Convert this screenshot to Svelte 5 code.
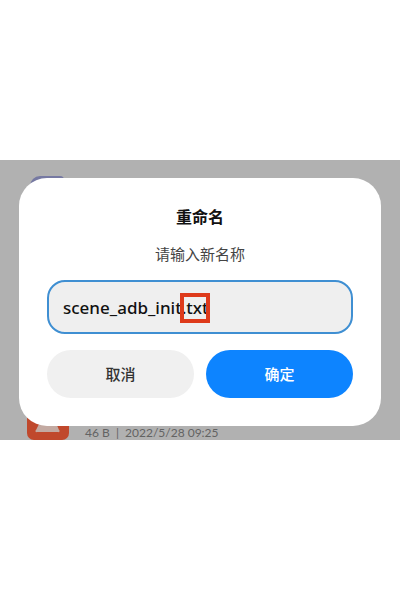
<script>
    let fileName = "scene_adb_init.txt";

    const behind = {
        size: "46 B",
        modified: "2022/5/28 09:25",
    };
</script>

<main class="screen">
    <div class="files">
        <div class="file">
            <span class="folder-icon"></span>
        </div>
        <div class="file">
            <svg class="file-icon" width="42" height="42" viewBox="0 0 42 42" aria-hidden="true">
                <rect width="42" height="42" rx="7" fill="#c0482c" />
                <path d="M15 20h12l5 12a1 1 0 0 1-1 2H10a1 1 0 0 1-1-2z" fill="#c3aaa2" />
            </svg>
            <span class="details">{behind.size} &nbsp;|&nbsp; {behind.modified}</span>
        </div>
    </div>

    <form class="dialog" on:submit|preventDefault>
        <h1>重命名</h1>
        <label for="file-name">请输入新名称</label>
        <div class="field">
            <input id="file-name" type="text" bind:value={fileName} />
            <span class="highlight"></span>
        </div>
        <div class="buttons">
            <button type="button" class="cancel">取消</button>
            <button type="submit" class="confirm">确定</button>
        </div>
    </form>
</main>

<style>
    :global(body) {
        background: #fff;
    }
    .screen {
        position: relative;
        margin: 160px 0;
        padding: 18px 19px 14px;
        background: #b1b1b1;
        overflow: hidden;
        font-family: Roboto, "Noto Sans CJK SC", sans-serif;
    }
    .files {
        position: absolute;
        top: 16px;
        bottom: 0;
        left: 27px;
        right: 27px;
        display: flex;
        flex-direction: column;
        justify-content: space-between;
    }
    .file {
        display: flex;
        align-items: flex-end;
        gap: 16px;
    }
    .folder-icon {
        width: 34px;
        height: 30px;
        margin-left: 3px;
        border-radius: 10px 4px 8px 8px;
        background: #7679a2;
    }
    .file-icon {
        display: block;
    }
    .details {
        color: #636363;
        font-family: Lato, sans-serif;
        font-size: 12px;
        line-height: 14px;
    }
    .dialog {
        position: relative;
        padding: 28px;
        border-radius: 28px;
        background: #fff;
        text-align: center;
    }
    h1 {
        margin: 0 0 14px;
        color: #111;
        font-size: 16px;
        font-weight: 700;
        line-height: 24px;
    }
    label {
        display: block;
        margin-bottom: 14px;
        color: #444;
        font-size: 15px;
        line-height: 22px;
    }
    .field {
        position: relative;
        margin-bottom: 16px;
    }
    input {
        display: block;
        box-sizing: border-box;
        width: 100%;
        height: 54px;
        padding: 0 14px;
        border: 2px solid #3f8fd2;
        border-radius: 18px;
        outline: none;
        background: #efefef;
        color: #111;
        font-family: "Noto Sans", "Noto Sans CJK SC", sans-serif;
        font-size: 17px;
        font-weight: 500;
    }
    .highlight {
        position: absolute;
        top: 13px;
        left: 133px;
        box-sizing: border-box;
        width: 30px;
        height: 30px;
        border: 4px solid #de3a1b;
        pointer-events: none;
    }
    .buttons {
        display: grid;
        grid-template-columns: 1fr 1fr;
        gap: 12px;
    }
    button {
        height: 48px;
        padding: 0 0 2px;
        border: none;
        border-radius: 24px;
        font-family: inherit;
        font-size: 15px;
        font-weight: 500;
        cursor: pointer;
    }
    .cancel {
        background: #f0f0f0;
        color: #333;
    }
    .confirm {
        background: #0d84ff;
        color: #fff;
    }
</style>
